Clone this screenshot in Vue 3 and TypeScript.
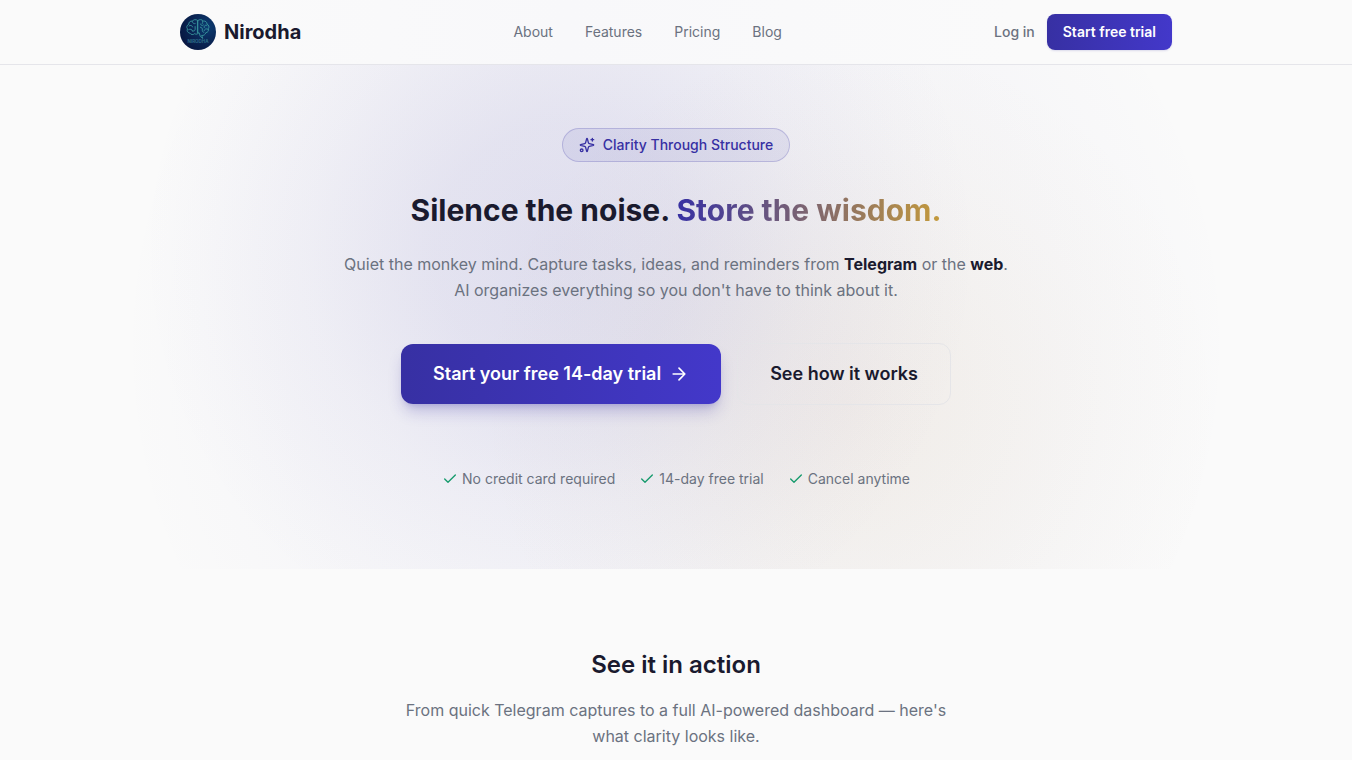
<script setup lang="ts">
interface NavItem {
  label: string
  href: string
}

const navItems: NavItem[] = [
  { label: 'About', href: '#about' },
  { label: 'Features', href: '#features' },
  { label: 'Pricing', href: '#pricing' },
  { label: 'Blog', href: '#blog' },
]

const assurances: string[] = ['No credit card required', '14-day free trial', 'Cancel anytime']
</script>

<template>
  <div class="page">
    <header class="header">
      <div class="header-inner">
        <a class="brand" href="#top">
          <svg class="logo" viewBox="0 0 36 36" role="img" aria-label="Nirodha logo">
            <defs>
              <radialGradient id="logo-fill" cx="0.75" cy="0.35" r="0.9">
                <stop offset="0" stop-color="#0c3d72" />
                <stop offset="0.5" stop-color="#0a2554" />
                <stop offset="1" stop-color="#07123a" />
              </radialGradient>
            </defs>
            <circle cx="18" cy="18" r="18" fill="url(#logo-fill)" />
            <g transform="translate(-2.500 -1.800) scale(1.160)" fill="none" stroke="#38939c" stroke-width="0.8" stroke-linecap="round" stroke-linejoin="round">
              <path d="M17.500 7.200c-1.600-1.400-4-.9-4.600.5-2-.3-3.400 1.100-3.100 2.700-1.800.8-2.300 2.700-1.200 4-.8 1.700.2 3.400 2 3.600.9 1.500 3 1.700 4.200.5 1.100.8 2.600.5 3.300-.5" />
              <path d="M17.500 7.200c1.600-1.300 3.700-1 4.600.4 2-.2 3.400 1 3.300 2.600 1.700.8 2.200 2.600 1.200 4 .6 1.700-.5 3.300-2.200 3.500-.4 1.700-2 2.700-3.600 2.300l1 2.600-2.200-1.800-.8-2.800-1.300-.3z" />
              <path d="M10 11.800c1.300-.9 2.700-.4 3 .9M12.900 8.200c.1 1.300 1.200 2 2.300 1.600M9.600 15c1.500-.9 3.100-.2 3.300 1.200M15.200 12.400v2.300c0 1.300-1.300 1.900-2.200 1.500M17.500 7.800v9.800M19.800 10.200c.2 1.300 1.600 1.700 2.500.9M21.500 7.800c.4.900.2 1.600-.3 2.200M25.300 11.200c-1.500-.4-2.600.7-2.300 2M26 14.600c-1.300-.7-2.700-.1-3 1.200M19.700 12.900c1.300.1 2 1.200 1.700 2.600-.2 1 .4 1.700 1.300 1.800" />
            </g>
            <text x="18" y="29" text-anchor="middle" fill="#2d6d89" font-family="Inter, sans-serif" font-size="4.500">NIRODHA</text>
          </svg>
          <span>Nirodha</span>
        </a>
        <nav class="nav" aria-label="Main">
          <a v-for="item in navItems" :key="item.label" :href="item.href">{{ item.label }}</a>
        </nav>
        <div class="account">
          <a class="login" href="#login">Log in</a>
          <button class="button button-small" type="button">Start free trial</button>
        </div>
      </div>
    </header>

    <main>
      <section class="hero">
        <div class="badge">
          <svg class="icon" viewBox="0 0 24 24" aria-hidden="true">
            <path d="M9.937 15.500A2 2 0 0 0 8.500 14.063l-6.135-1.582a.5.5 0 0 1 0-.962L8.500 9.936A2 2 0 0 0 9.937 8.500l1.582-6.135a.5.5 0 0 1 .963 0L14.063 8.500A2 2 0 0 0 15.500 9.937l6.135 1.581a.5.5 0 0 1 0 .964L15.500 14.063a2 2 0 0 0-1.437 1.437l-1.582 6.135a.5.5 0 0 1-.963 0z" />
            <path d="M20 2v4M22 4h-4" />
            <circle cx="4" cy="20" r="2" />
          </svg>
          Clarity Through Structure
        </div>
        <h1>Silence the noise. <span class="accent">Store the wisdom.</span></h1>
        <p class="lead">
          Quiet the monkey mind. Capture tasks, ideas, and reminders from <strong>Telegram</strong> or the
          <strong>web</strong>.<br />AI organizes everything so you don't have to think about it.
        </p>
        <div class="actions">
          <button class="button button-large" type="button">
            Start your free 14-day trial
            <svg class="arrow" viewBox="0 0 24 24" aria-hidden="true"><path d="M5 12h14M12 5l7 7-7 7" /></svg>
          </button>
          <button class="button-outline" type="button">See how it works</button>
        </div>
        <ul class="assurances">
          <li v-for="text in assurances" :key="text">
            <svg class="check" viewBox="0 0 24 24" aria-hidden="true"><path d="M20 6 9 17l-5-5" /></svg>
            {{ text }}
          </li>
        </ul>
      </section>

      <section class="preview">
        <h2>See it in action</h2>
        <p>From quick Telegram captures to a full AI-powered dashboard — here's what clarity looks like.</p>
      </section>
    </main>
  </div>
</template>

<style>
body {
  background: #fafafa;
}
</style>

<style scoped>
.page {
  color: #1a1a2e;
  font-family: Inter, 'Liberation Sans', sans-serif;
  font-size: 16px;
  line-height: 24px;
}

a {
  color: inherit;
  text-decoration: none;
}

button {
  font-family: inherit;
  cursor: pointer;
}

svg {
  flex: none;
  fill: none;
  stroke: currentColor;
  stroke-width: 2;
  stroke-linecap: round;
  stroke-linejoin: round;
}

.header {
  border-bottom: 1px solid #e5e5ea;
  background: linear-gradient(90deg, #fafafa 15%, #f8f8fa 42%, #fafafa 75%);
}

.header-inner {
  display: grid;
  grid-template-columns: auto auto auto;
  justify-content: space-between;
  align-items: center;
  box-sizing: border-box;
  max-width: 1024px;
  height: 64px;
  margin: 0 auto;
  padding: 0 16px;
}

.brand {
  display: flex;
  align-items: center;
  gap: 8px;
  font-size: 20px;
  font-weight: 700;
}

.logo {
  width: 36px;
  height: 36px;
  stroke: none;
}

.nav {
  display: flex;
  gap: 32px;
  color: #6b7280;
  font-size: 14px;
}

.account {
  display: flex;
  align-items: center;
  gap: 12px;
  font-size: 14px;
}

.login {
  color: #6b7280;
  font-weight: 500;
}

.button {
  border: 0;
  color: #fff;
  background: linear-gradient(90deg, #3730a3, #4338ca);
  font-weight: 600;
}

.button-small {
  height: 36px;
  padding: 0 16px;
  border-radius: 8px;
  font-size: 14px;
  line-height: 20px;
  box-shadow: 0 1px 2px rgb(55 48 163 / 15%);
}

.hero {
  display: flex;
  flex-direction: column;
  align-items: center;
  padding: 63px 16px 80px;
  text-align: center;
  background:
    radial-gradient(circle 420px at calc(50% - 116px) 186px, rgb(55 48 163 / 11%), rgb(55 48 163 / 9%) 30%, rgb(55 48 163 / 4%) 60%, rgb(55 48 163 / 1%) 85%, transparent),
    radial-gradient(circle 370px at calc(50% + 174px) 340px, rgb(196 140 60 / 8%), rgb(196 150 60 / 6%) 30%, rgb(196 154 60 / 2%) 70%, transparent),
    radial-gradient(circle 560px at 50% 280px, rgb(55 48 163 / 4%), rgb(55 48 163 / 2%) 70%, transparent);
}

.badge {
  display: flex;
  align-items: center;
  gap: 8px;
  padding: 6px 16px;
  border: 1px solid rgb(55 48 163 / 22%);
  border-radius: 999px;
  color: #3730a3;
  background: rgb(55 48 163 / 8%);
  font-size: 14px;
  font-weight: 500;
  line-height: 20px;
}

.icon {
  width: 16px;
  height: 16px;
}

h1 {
  margin: 30px 0 23px;
  font-size: 30px;
  font-weight: 700;
  line-height: 36px;
}

.accent {
  color: transparent;
  background: linear-gradient(90deg, #3730a3, #c49a3c);
  background-clip: text;
}

.lead {
  margin: 0 0 40px;
  color: #6b7280;
  line-height: 26px;
}

.lead strong {
  color: #1a1a2e;
  font-weight: 700;
}

.actions {
  display: flex;
  flex-wrap: wrap;
  justify-content: center;
  align-items: center;
  gap: 16px;
}

.button-large {
  display: flex;
  align-items: center;
  gap: 8px;
  height: 60px;
  padding: 0 32px;
  border-radius: 12px;
  font-size: 18px;
  line-height: 28px;
  box-shadow: 0 10px 15px -3px rgb(55 48 163 / 25%), 0 4px 6px -4px rgb(55 48 163 / 25%);
}

.arrow {
  width: 20px;
  height: 20px;
}

.button-outline {
  height: 62px;
  padding: 0 32px;
  border: 1px solid #e5e5e8;
  border-radius: 12px;
  color: #1a1a2e;
  background: transparent;
  font-size: 18px;
  font-weight: 600;
  line-height: 28px;
}

.assurances {
  display: flex;
  flex-wrap: wrap;
  justify-content: center;
  gap: 24px;
  margin: 64px 0 0;
  padding: 0;
  color: #6b7280;
  font-size: 14px;
  line-height: 20px;
  list-style: none;
}

.assurances li {
  display: flex;
  align-items: center;
  gap: 4px;
}

.check {
  width: 16px;
  height: 16px;
  color: #159a6c;
}

.preview {
  padding: 80px 16px 8px;
  text-align: center;
}

h2 {
  margin: 0 0 16px;
  font-size: 24px;
  font-weight: 600;
  line-height: 32px;
}

.preview p {
  max-width: 576px;
  margin: 0 auto;
  color: #6b7280;
  line-height: 26px;
}
</style>
